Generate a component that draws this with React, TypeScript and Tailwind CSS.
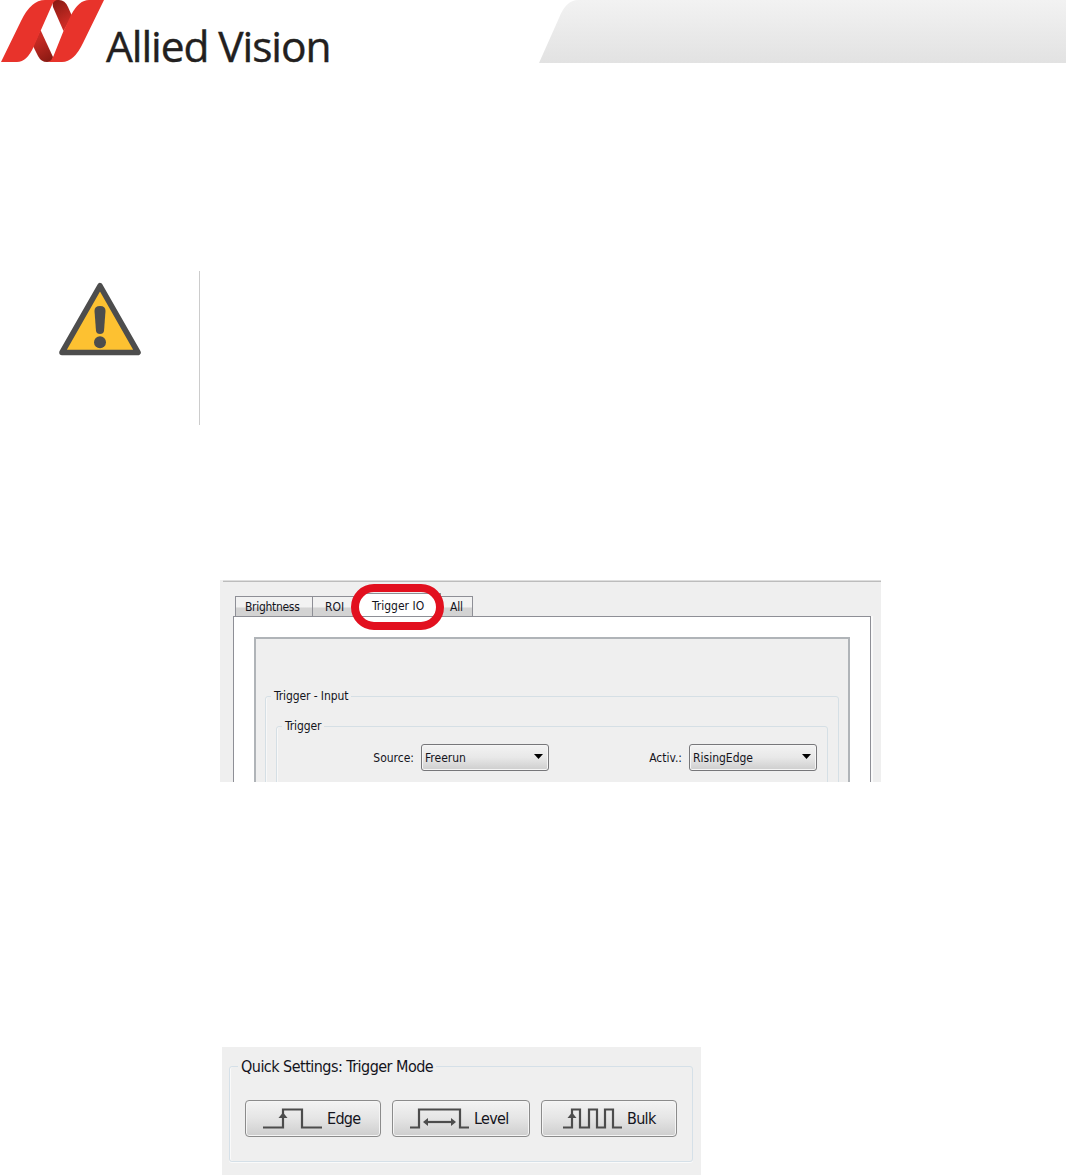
import type { ReactNode } from 'react';
import { clsx } from 'clsx';

const UI_FONT = "font-['DejaVu_Sans_Condensed','DejaVu_Sans',sans-serif] [font-stretch:condensed] text-[#14141c]";

function Logo() {
  return (
    <div className="flex items-start">
      <svg width="106" height="63" viewBox="0 0 106 63" className="shrink-0">
        <defs>
          <linearGradient id="foldTop" x1="0.2" y1="0" x2="0.6" y2="1">
            <stop offset="0" stopColor="#8a1a13" />
            <stop offset="0.8" stopColor="#c92b24" />
          </linearGradient>
          <linearGradient id="foldBottom" x1="0.3" y1="0" x2="0.7" y2="1">
            <stop offset="0.2" stopColor="#c92b24" />
            <stop offset="1" stopColor="#8a1a13" />
          </linearGradient>
        </defs>
        <path d="M54 0H59Q65 0 68 7L72 16L63.500 31L53 7Q52 2 54 0Z" fill="url(#foldTop)" />
        <path d="M40.500 30L53 57Q53 62 47 62Q41 62 38 56L33 46Z" fill="url(#foldBottom)" />
        <path d="M1 62L21 21Q31 0 45 0H58Q54 0 52 5L40.500 31L34 46Q27 62 17 62Z" fill="#e8332b" />
        <path d="M47 62Q51 62 53.500 56L63.500 31L71 15Q79 0 89 0H104L83 43Q74 62 62 62Z" fill="#e8332b" />
      </svg>
      <span className="mt-[16px] font-['Open_Sans','Noto_Sans',sans-serif] text-[42.5px] leading-[60px] tracking-[-1.1px] whitespace-nowrap text-[#231f20] [-webkit-text-stroke:0.4px_#231f20]">
        Allied Vision
      </span>
    </div>
  );
}

function HeaderBanner() {
  return (
    <svg width="527" height="63" viewBox="0 0 527 63" className="shrink-0">
      <defs>
        <linearGradient id="banner" x1="0" y1="0" x2="0" y2="1">
          <stop offset="0" stopColor="#f2f2f2" />
          <stop offset="1" stopColor="#e2e2e2" />
        </linearGradient>
      </defs>
      <path d="M0 63L20 18Q27 0 39 0H527V63Z" fill="url(#banner)" />
    </svg>
  );
}

function WarningIcon() {
  return (
    <svg width="84" height="76" viewBox="0 0 84 76">
      <path d="M42 4.800L80 71.500H4Z" fill="#fdc131" stroke="#4d4d4d" strokeWidth="5.600" strokeLinejoin="round" />
      <path d="M36.500 30Q36.500 25 42 25Q47.500 25 47.500 30L46 50Q45.500 53 42 53Q38.500 53 38 50Z" fill="#4d4d4d" />
      <circle cx="42" cy="61.300" r="6" fill="#4d4d4d" />
    </svg>
  );
}

function Tab({ label, className, active }: { label: string; className: string; active?: boolean }) {
  return (
    <div
      className={clsx(
        'flex border border-b-0 border-[#8e8f96] leading-none',
        active ? 'h-[23px] bg-white pt-[6px]' : 'h-5 bg-linear-to-b from-[#f2f2f2] from-50% to-[#d3d3d3] to-60% pt-[4px]',
        className
      )}
    >
      <span className="whitespace-nowrap">{label}</span>
    </div>
  );
}

function Select({ value }: { value: string }) {
  return (
    <div className="flex h-[27px] w-32 items-center justify-between rounded-[3px] border border-[#77777a] bg-linear-to-b from-[#f3f3f3] via-[#e8e8e8] via-50% to-[#cecece] pr-[5px] pl-[3px] shadow-[inset_0_0_0_1px_#f6f6f6]">
      <span className="pt-px">{value}</span>
      <svg width="9" height="5" viewBox="0 0 9 5" className="mb-[3px]">
        <path d="M0 0H9L4.500 5Z" fill="#000" />
      </svg>
    </div>
  );
}

function ModeButton({ label, className, children }: { label: string; className: string; children: ReactNode }) {
  return (
    <button
      className={clsx(
        'flex h-[37px] items-center rounded-[4px] border border-[#8b8b8b] bg-linear-to-b from-[#f3f3f3] from-0% via-[#e5e5e5] via-49% to-[#cecece] shadow-[inset_0_0_0_1px_#f5f5f5]',
        className
      )}
    >
      <svg width="60" height="26" viewBox="0 0 60 26" fill="none" stroke="#4c4c4c" strokeWidth="2.200" className="mb-[2px] shrink-0">
        {children}
      </svg>
      <span className="ml-[4px]">{label}</span>
    </button>
  );
}

function TriggerPanel() {
  return (
    <section className={clsx('relative ml-[220px] h-[202px] w-[661px] overflow-hidden bg-[#efefef] text-[12px]', UI_FONT)}>
      <div className="ml-[3px] h-[2px] border-b border-[#bcbcbc] bg-[#dedede]" />
      <div className="flex h-[34px] items-end pl-[15px]">
        <Tab label="Brightness" className="w-[78px] pl-[9px] tracking-[-0.3px]" />
        <Tab label="ROI" className="-ml-px w-[46px] pl-[12px]" />
        <Tab label="Trigger IO" className="-ml-px w-[84px] pl-[14px]" active />
        <Tab label="All" className="-ml-px w-[33px] pl-[9px] tracking-[-0.2px]" />
      </div>
      <div className="ml-[13px] h-[170px] w-[638px] border border-[#8e8f96] bg-white px-[20px] pt-[20px] shadow-[2px_0_0_#fafafa]">
        <div className="h-[160px] w-[596px] border-2 border-[#b0b4b8] bg-[#efefef] pt-[49px] pl-[9px]">
          <fieldset className="h-[120px] w-[574px] rounded-[3px] border border-[#d5dfe5] pl-[10px] shadow-[inset_1px_0_0_#f8f8f8]">
            <legend className="-ml-[5px] px-[3px] leading-4 tracking-[-0.1px] whitespace-nowrap">Trigger - Input</legend>
            <fieldset className="mt-[14px] h-[90px] w-[552px] rounded-[3px] border border-[#d5dfe5] shadow-[inset_1px_0_0_#f8f8f8]">
              <legend className="ml-[5px] px-[3px] leading-4 tracking-[-0.1px]">Trigger</legend>
              <div className="mt-[10px] flex items-center">
                <span className="w-[137px] pt-px text-right">Source:</span>
                <div className="ml-[7px]"><Select value="Freerun" /></div>
                <span className="ml-[91px] w-[42px] pt-px text-right">Activ.:</span>
                <div className="ml-[7px]"><Select value="RisingEdge" /></div>
              </div>
            </fieldset>
          </fieldset>
        </div>
      </div>
      <div className="absolute top-1 left-[131px] h-[46px] w-[93px] rounded-[23px] border-8 border-[#e2101f]" />
    </section>
  );
}

function QuickSettings() {
  return (
    <section className={clsx('ml-[222px] h-[128px] w-[479px] overflow-hidden bg-[#efefef] pt-[10px] pl-[7px] text-[16px]', UI_FONT)}>
      <fieldset className="h-[105px] w-[464px] rounded-[3px] border border-[#d5e0e8] shadow-[inset_1px_0_0_#fafafa,0_1px_0_#fafafa]">
        <legend className="ml-[8px] px-[3px] pt-px leading-[18px] tracking-[-0.53px] whitespace-nowrap">Quick Settings: Trigger Mode</legend>
        <div className="mt-[24px] ml-[15px] flex tracking-[-0.7px]">
          <ModeButton label="Edge" className="w-[136px] pl-[17px]">
            <path d="M0 22.500H20V4.500H39V22.500H59" />
            <path d="M20 7.500L24.500 13H15.500Z" fill="#4c4c4c" stroke="none" />
          </ModeButton>
          <ModeButton label="Level" className="ml-[11px] w-[138px] pl-[17px]">
            <path d="M0 22.500H9V4.500H50V22.500H59" />
            <path d="M16 17H43" />
            <path d="M13 17L18 13V21ZM46 17L41 13V21Z" fill="#4c4c4c" stroke="none" />
          </ModeButton>
          <ModeButton label="Bulk" className="ml-[11px] w-[136px] pl-[21px]">
            <path d="M0 22.500H9V4.500H17V22.500H26V4.500H34V22.500H42V4.500H50V22.500H59" />
            <path d="M9 7.500L13.500 13H4.500Z" fill="#4c4c4c" stroke="none" />
          </ModeButton>
        </div>
      </fieldset>
    </section>
  );
}

export default function App() {
  return (
    <main className="h-[1175px] w-[1066px] overflow-hidden bg-white">
      <header className="flex h-[84px] items-start justify-between">
        <Logo />
        <HeaderBanner />
      </header>
      <section className="mt-[187px] flex h-[154px]">
        <div className="w-[199px] pt-[10px] pl-[58px]">
          <WarningIcon />
        </div>
        <div className="w-px bg-[#cccccc]" />
      </section>
      <div className="mt-[155px]">
        <TriggerPanel />
      </div>
      <div className="mt-[265px]">
        <QuickSettings />
      </div>
    </main>
  );
}
